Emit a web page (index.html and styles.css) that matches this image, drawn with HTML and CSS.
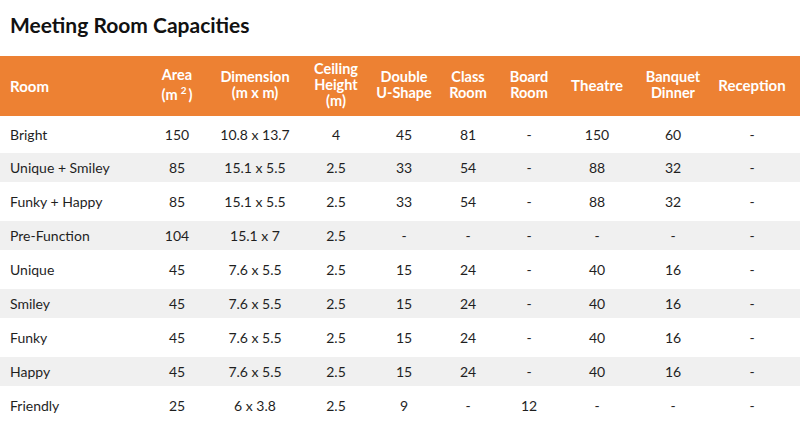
FILE: index.html
```html
<!DOCTYPE html>
<html lang="en">
<head>
<meta charset="utf-8">
<title>Meeting Room Capacities</title>
<link rel="stylesheet" href="styles.css">
</head>
<body>
<h1 class="title">Meeting Room Capacities</h1>
<div class="table">
  <div class="row head">
    <div class="cell first">Room</div>
    <div class="cell"><div class="stack"><span class="ln">Area</span><span class="ln unit">(m<sup>2</sup>)</span></div></div>
    <div class="cell"><div class="stack"><span class="ln">Dimension</span><span class="ln">(m x m)</span></div></div>
    <div class="cell"><div class="stack"><span class="ln">Ceiling</span><span class="ln">Height</span><span class="ln">(m)</span></div></div>
    <div class="cell"><div class="stack"><span class="ln">Double</span><span class="ln">U-Shape</span></div></div>
    <div class="cell"><div class="stack"><span class="ln">Class</span><span class="ln">Room</span></div></div>
    <div class="cell"><div class="stack"><span class="ln">Board</span><span class="ln">Room</span></div></div>
    <div class="cell">Theatre</div>
    <div class="cell"><div class="stack"><span class="ln">Banquet</span><span class="ln">Dinner</span></div></div>
    <div class="cell">Reception</div>
  </div>
  <div class="row odd top">
    <div class="cell first">Bright</div><div class="cell">150</div><div class="cell">10.8 x 13.7</div><div class="cell">4</div><div class="cell">45</div><div class="cell">81</div><div class="cell">-</div><div class="cell">150</div><div class="cell">60</div><div class="cell">-</div>
  </div>
  <div class="row even">
    <div class="cell first">Unique + Smiley</div><div class="cell">85</div><div class="cell">15.1 x 5.5</div><div class="cell">2.5</div><div class="cell">33</div><div class="cell">54</div><div class="cell">-</div><div class="cell">88</div><div class="cell">32</div><div class="cell">-</div>
  </div>
  <div class="row odd">
    <div class="cell first">Funky + Happy</div><div class="cell">85</div><div class="cell">15.1 x 5.5</div><div class="cell">2.5</div><div class="cell">33</div><div class="cell">54</div><div class="cell">-</div><div class="cell">88</div><div class="cell">32</div><div class="cell">-</div>
  </div>
  <div class="row even">
    <div class="cell first">Pre-Function</div><div class="cell">104</div><div class="cell">15.1 x 7</div><div class="cell">2.5</div><div class="cell">-</div><div class="cell">-</div><div class="cell">-</div><div class="cell">-</div><div class="cell">-</div><div class="cell">-</div>
  </div>
  <div class="row odd">
    <div class="cell first">Unique</div><div class="cell">45</div><div class="cell">7.6 x 5.5</div><div class="cell">2.5</div><div class="cell">15</div><div class="cell">24</div><div class="cell">-</div><div class="cell">40</div><div class="cell">16</div><div class="cell">-</div>
  </div>
  <div class="row even">
    <div class="cell first">Smiley</div><div class="cell">45</div><div class="cell">7.6 x 5.5</div><div class="cell">2.5</div><div class="cell">15</div><div class="cell">24</div><div class="cell">-</div><div class="cell">40</div><div class="cell">16</div><div class="cell">-</div>
  </div>
  <div class="row odd">
    <div class="cell first">Funky</div><div class="cell">45</div><div class="cell">7.6 x 5.5</div><div class="cell">2.5</div><div class="cell">15</div><div class="cell">24</div><div class="cell">-</div><div class="cell">40</div><div class="cell">16</div><div class="cell">-</div>
  </div>
  <div class="row even">
    <div class="cell first">Happy</div><div class="cell">45</div><div class="cell">7.6 x 5.5</div><div class="cell">2.5</div><div class="cell">15</div><div class="cell">24</div><div class="cell">-</div><div class="cell">40</div><div class="cell">16</div><div class="cell">-</div>
  </div>
  <div class="row odd">
    <div class="cell first">Friendly</div><div class="cell">25</div><div class="cell">6 x 3.8</div><div class="cell">2.5</div><div class="cell">9</div><div class="cell">-</div><div class="cell">12</div><div class="cell">-</div><div class="cell">-</div><div class="cell">-</div>
  </div>
</div>
</body>
</html>
```
FILE: styles.css
```css
html, body {
  margin: 0;
  padding: 0;
  background: #ffffff;
}
body {
  width: 800px;
  height: 426px;
  overflow: hidden;
  font-family: "Lato", "Liberation Sans", sans-serif;
  color: #1f1f1f;
}
.title {
  margin: 0;
  padding: 12px 10px 0;
  height: 26px;
  font-size: 21px;
  line-height: 26px;
  font-weight: 700;
  color: #111111;
  margin-bottom: 18px;
}
.table {
  display: flex;
  flex-direction: column;
}
.row {
  display: grid;
  grid-template-columns: 138px 78px 78px 84px 52px 76px 46px 90px 62px 96px;
}
.cell {
  display: flex;
  align-items: center;
  justify-content: center;
  text-align: center;
  white-space: nowrap;
  font-size: 14px;
  line-height: 16px;
}
.cell.first {
  justify-content: flex-start;
  padding-left: 10px;
}
.head {
  height: 60px;
  background: #ed8133;
  color: #ffffff;
  font-weight: 700;
}
.head .cell {
  font-size: 15px;
  line-height: 16px;
  padding-bottom: 2px;
  box-sizing: border-box;
}
.head .cell.first {
  padding-bottom: 0;
}
.stack {
  display: flex;
  flex-direction: column;
  align-items: center;
}
.ln {
  display: block;
  height: 16px;
  line-height: 16px;
  font-size: 14.5px;
}
.unit {
  margin-top: 4px;
}
.head sup {
  font-size: 10px;
  line-height: 0;
  margin: 0 2px 0 3px;
  vertical-align: 6px;
}
.odd {
  height: 39px;
  background: #ffffff;
}
.odd.top {
  height: 37px;
}
.even {
  height: 29px;
  background: #f0f0f0;
}
```
